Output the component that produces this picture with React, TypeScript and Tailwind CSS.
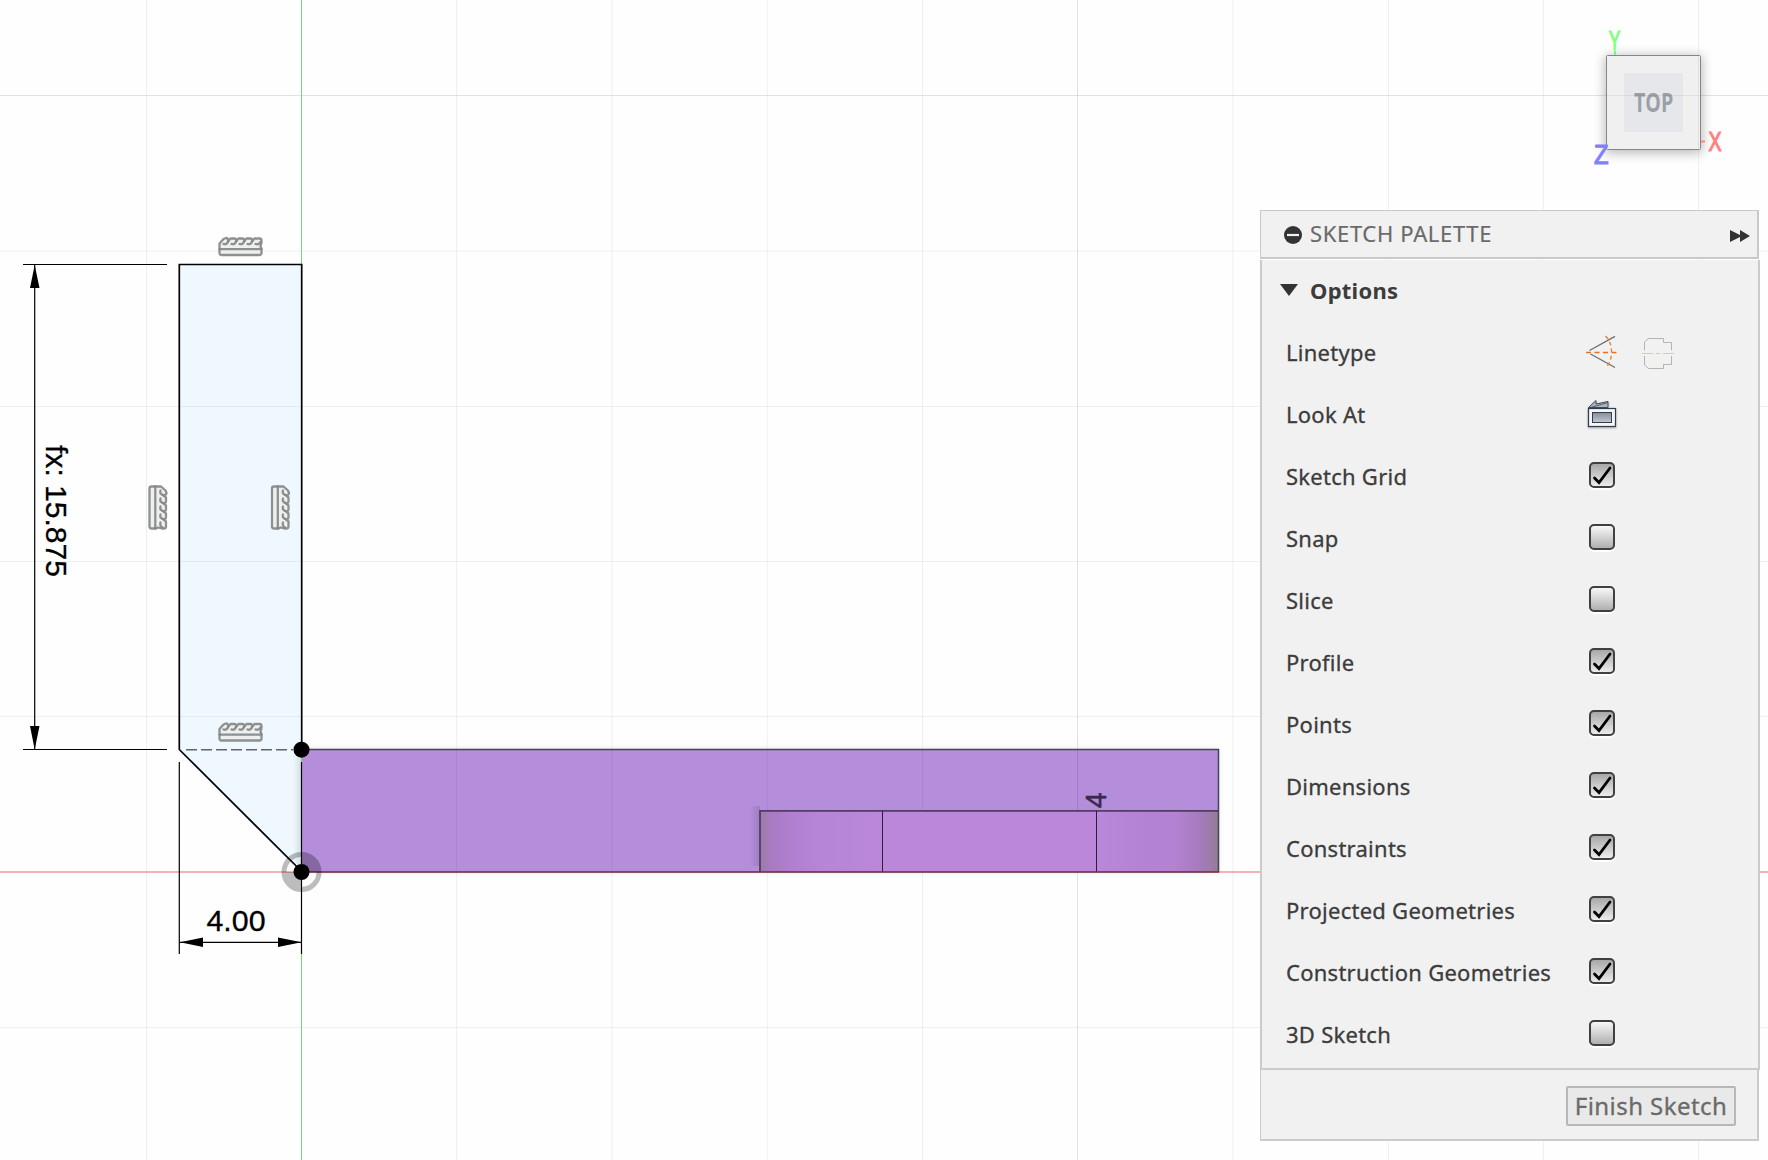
import React from "react";

const V = [146.5, 456.5, 612, 767.3, 922.5, 1077.5, 1233, 1388.5, 1543.5, 1698.5];
const H = [95.5, 251, 406.5, 561.5, 716.5, 1027.5];

function Hatch({ x, y, vertical }: { x: number; y: number; vertical?: boolean }) {
  return (
    <g
      transform={vertical ? `translate(${x} ${y}) rotate(90)` : `translate(${x} ${y})`}
      fill="none"
      stroke="#858887"
      strokeOpacity="0.92"
      strokeWidth="2.300"
      strokeLinejoin="round"
      strokeLinecap="round"
    >
      <path
        d="M-19 8.500Q-21 8.500-21 6.500V-3L-17-7.500L-14.500-8.500Q-11.500-8-12.500-5L-10-8H-6.500Q-3.500-8-4.500-5L-2-8H1.500Q4.500-8 3.500-5L6-8H9.500Q12.500-8 11.500-5L14-8H19Q21-8 21-6V-4L20 0L21 2V6.500Q21 8.500 19 8.500Z"
        fill="#eef0f0"
      />
      <path d="M-21 2.700H21M-12.500-5Q-13.500-1.500-17-2.500M-4.500-5Q-5.500-1.500-9-2.500M3.500-5Q2.500-1.500-1-2.500M11.500-5Q10.500-1.500 7-2.500M20-4.500Q18.500-1.500 15-2.500" />
    </g>
  );
}

function Drawing() {
  return (
    <svg className="absolute inset-0 block" width="1768" height="1160" viewBox="0 0 1768 1160">
      <defs>
        <linearGradient id="curveL">
          <stop offset="0" stopColor="#9c7aa8" />
          <stop offset="0.08" stopColor="#a67bc0" />
          <stop offset="0.25" stopColor="#b07fd0" />
          <stop offset="0.5" stopColor="#b785d8" />
          <stop offset="1" stopColor="#ba87da" />
        </linearGradient>
        <linearGradient id="curveR">
          <stop offset="0" stopColor="#ba87da" />
          <stop offset="0.45" stopColor="#b382d4" />
          <stop offset="0.65" stopColor="#b382d2" />
          <stop offset="0.85" stopColor="#a57bbd" />
          <stop offset="0.95" stopColor="#9c7ba6" />
          <stop offset="1" stopColor="#917d90" />
        </linearGradient>
        <linearGradient id="shadeL">
          <stop offset="0" stopColor="#806499" stopOpacity="0" />
          <stop offset="1" stopColor="#806499" stopOpacity="0.4" />
        </linearGradient>
        <linearGradient id="edgeShade">
          <stop offset="0" stopColor="#9aa5a8" stopOpacity="0" />
          <stop offset="1" stopColor="#9aa5a8" stopOpacity="0.3" />
        </linearGradient>
        <filter id="soft" x="-5%" y="-15%" width="110%" height="130%">
          <feGaussianBlur stdDeviation="3" />
        </filter>
        <filter id="halo" x="-20%" y="-20%" width="140%" height="140%">
          <feGaussianBlur stdDeviation="6" />
        </filter>
      </defs>

      <rect x="303" y="749" width="915" height="123" fill="#000" opacity="0.1" filter="url(#soft)" />
      <path d="M179.500 264.500H301.500V871.500L179.500 749.500Z" fill="#f0f8ff" />
      <rect x="293" y="756" width="8" height="108" fill="url(#edgeShade)" />
      <rect x="301.500" y="750" width="917" height="122" fill="#b48ddb" />
      <rect x="750" y="806" width="10" height="60" fill="url(#shadeL)" />
      <rect x="760" y="811" width="122" height="61" fill="url(#curveL)" />
      <rect x="882" y="811" width="214" height="61" fill="#ba87da" />
      <rect x="1096" y="811" width="122" height="61" fill="url(#curveR)" />

      <g stroke="#000" strokeOpacity="0.055">
        {V.map((x) => (
          <path key={x} d={x > 700 && x < 1218 ? `M${x} 0V810M${x} 873V1160` : `M${x} 0V1160`} />
        ))}
        {H.map((y) => (
          <path key={y} d={`M0 ${y}H1768`} />
        ))}
        <path d="M1077.500 0V810M1077.500 873V1160M0 95.500H1768" />
      </g>

      <path d="M0 872H1768" stroke="#e03038" strokeOpacity="0.36" strokeWidth="2" />
      <path d="M301.500 0V1160" stroke="#77d877" />

      <g fill="none">
        <path d="M301 749.500H1218.500V872" strokeWidth="1.500" stroke="#454558" />
        <path d="M760 872V810.800H1218" strokeWidth="1.800" stroke="#513e62" />
        <path d="M882.500 811V872M1096.500 811V872" stroke="#2c1d38" />
        <path d="M302 872H1219" stroke="#673547" strokeWidth="1.600" />
      </g>
      <text
        transform="translate(1105.500 808) rotate(-90)"
        fontFamily="Liberation Sans"
        fontSize="30"
        textLength="15.500"
        lengthAdjust="spacingAndGlyphs"
        fill="#3b2a4c"
        stroke="#3b2a4c"
        strokeWidth="0.600"
      >
        4
      </text>

      <g fill="none" stroke="#000">
        <path d="M301.500 762V954M23 264.500H167M23 749.500H167M34.700 264V750M179.300 762V954M179 942.300H302" strokeWidth="1.200" />
        <path d="M301.700 871.500L179.300 749.500V264.500H301.700V750" strokeWidth="1.700" />
        <path d="M186 749.700H293" stroke="#606569" strokeWidth="1.400" strokeDasharray="11 4" />
      </g>
      <g fill="#000">
        <path d="M34.700 265L39.500 288H30ZM34.700 749.500L39.500 726H30ZM180 942.300L203 937.500V947ZM301.500 942.300L278 937.500V947Z" />
        <circle cx="301.500" cy="749.700" r="8" />
        <path d="M301.500 872V857A15 15 0 0 1 316.500 872ZM301.500 872V887A15 15 0 0 1 286.500 872Z" fillOpacity="0.26" />
        <circle cx="301.500" cy="872" r="17.500" fill="none" stroke="#000" strokeOpacity="0.26" strokeWidth="5" />
        <circle cx="301.500" cy="872" r="8" />
        <g stroke="#000" strokeWidth="0.300">
          <text x="206.500" y="930.500" fontFamily="Liberation Sans" fontSize="30" textLength="59" lengthAdjust="spacingAndGlyphs">
            4.00
          </text>
          <text transform="translate(46 445) rotate(90)" fontFamily="Liberation Sans" fontSize="30" textLength="132" lengthAdjust="spacingAndGlyphs">
            fx: 15.875
          </text>
        </g>
      </g>
      <Hatch x={240.5} y={246.5} />
      <Hatch x={240.5} y={732} />
      <Hatch x={158} y={507.5} vertical />
      <Hatch x={280.5} y={507.5} vertical />

      <rect x="1605" y="56" width="97" height="97" fill="#000" opacity="0.28" filter="url(#halo)" />
      <path d="M1615 51V56" stroke="#80f080" strokeWidth="2" />
      <path d="M1700 141.500H1705" stroke="#ff8585" strokeWidth="2" />
      <rect x="1606.500" y="55.500" width="94" height="94" rx="1" fill="#f0f0f0" stroke="#868686" />
      <rect x="1624" y="73" width="59" height="59" fill="#e6e7eb" />
      <g fontFamily="Liberation Sans">
        <text
          transform="translate(1634 112) scale(0.720 1)"
          fontFamily="Open Sans"
          fontWeight="700"
          fontSize="27"
          fill="#9c9fa8"
          textLength="54.500"
          lengthAdjust="spacingAndGlyphs"
        >
          TOP
        </text>
        <text transform="translate(1608.700 50.300) scale(0.640 1)" fontSize="27.500" fill="#80ff80" stroke="#80ff80" strokeWidth="1.200">
          Y
        </text>
        <text transform="translate(1708.500 151) scale(0.700 1)" fontSize="28" fill="#ff8080" stroke="#ff8080" strokeWidth="1.200">
          X
        </text>
        <text transform="translate(1594 164) scale(0.850 1)" fontSize="28" fill="#8080ff" stroke="#8080ff" strokeWidth="1.200">
          Z
        </text>
      </g>
      <path d="M1607 95.500H1700M1698.500 56V149" stroke="#000" strokeOpacity="0.06" />
    </svg>
  );
}

function LinetypeIcons() {
  return (
    <svg width="92" height="36" viewBox="1584 335 92 36" fill="none" className="block">
      <path d="M1589.500 350.500L1615 336.300M1590.500 354L1615 367.500" stroke="#707070" strokeWidth="1.400" />
      <path d="M1586 352.500H1617" stroke="#ed7020" strokeDasharray="5 3.500" strokeWidth="1.500" />
      <path d="M1605.500 336Q1611.500 342 1611.500 352T1605.500 368" stroke="#ed8038" strokeDasharray="4 3" strokeWidth="1.400" />
      <path
        d="M1644.500 350.500V342L1648.500 338.500H1663.500V342.500H1671.500V350.500M1644.500 356V365L1648.500 368.500H1663.500V364.500H1671.500V356"
        stroke="#b4b4b4"
      />
      <path d="M1642 353.500H1653M1656 353.500H1660M1663 353.500H1674" stroke="#edc2aa" />
    </svg>
  );
}

function LookAtIcon() {
  return (
    <svg width="32" height="32" viewBox="0 0 32 32" className="mb-0.5 ml-0.5 block drop-shadow-[0_1px_1px_rgba(0,0,0,0.3)]">
      <defs>
        <linearGradient id="screen" x2="0" y2="1">
          <stop stopColor="#858c98" />
          <stop offset="1" stopColor="#c3c9d2" />
        </linearGradient>
      </defs>
      <path d="M2.500 9.500L10 2.500V6L22 3.500V9.500Z" fill="#a9b6c2" stroke="#444b58" />
      <path d="M4.500 9.500L22 4.500" stroke="#444b58" strokeWidth="0.800" />
      <rect x="2.500" y="10.500" width="27" height="18" fill="#f3f6fb" stroke="#343b4b" strokeWidth="1.200" />
      <rect x="6.500" y="14.500" width="19" height="10" fill="url(#screen)" stroke="#343b4b" />
    </svg>
  );
}

function Check({ on }: { on: boolean }) {
  return (
    <span
      className={
        "mb-1 ml-[5px] block size-[26px] rounded-[5px] border-2 border-[#404040] shadow-[0_2px_1px_#fff] " +
        (on ? "bg-linear-to-b from-[#a8a8a8] to-[#ececec]" : "bg-linear-to-b from-[#f8f8f8] to-[#b0b0b0]")
      }
    >
      {on && (
        <svg width="22" height="22" viewBox="0 0 22 22" className="block">
          <path d="M3.500 14L8 18.500L19 4" fill="none" stroke="#000" strokeWidth="2.800" strokeLinecap="round" />
        </svg>
      )}
    </span>
  );
}

const rows: [string, React.ReactNode][] = [
  ["Linetype", <LinetypeIcons />],
  ["Look At", <LookAtIcon />],
  ["Sketch Grid", <Check on />],
  ["Snap", <Check on={false} />],
  ["Slice", <Check on={false} />],
  ["Profile", <Check on />],
  ["Points", <Check on />],
  ["Dimensions", <Check on />],
  ["Constraints", <Check on />],
  ["Projected Geometries", <Check on />],
  ["Construction Geometries", <Check on />],
  ["3D Sketch", <Check on={false} />],
];

export default function App() {
  return (
    <div className="relative flex h-[1160px] w-[1768px] justify-end overflow-hidden bg-[#fefefe] pt-[210px] pr-2 font-['Noto_Sans',sans-serif] text-[22px] leading-[30px]">
      <Drawing />
      <aside className="relative flex h-[931px] w-[500px] flex-col text-[#3c3c3c]">
        <header className="mb-px flex h-[49px] w-[499px] shrink-0 items-center border-t border-r-2 border-b-2 border-l border-[#c9c9c9] bg-[#f1f1f1] pr-[7px] pl-[23px]">
          <svg width="18" height="18" viewBox="0 0 18 18" className="mt-0.5 block">
            <circle cx="9" cy="9" r="9" fill="#333" />
            <path d="M3 9H15" stroke="#f1f1f1" strokeWidth="2.200" />
          </svg>
          <span className="mb-0.5 ml-2 tracking-[0.66px] text-[#6a6a6a] [-webkit-text-stroke:0.2px]">SKETCH PALETTE</span>
          <svg width="20" height="12" viewBox="0 0 20 12" fill="#333" className="mt-1 ml-auto block">
            <path d="M0 0L10 5V0L20 6L10 12V7L0 12Z" />
          </svg>
        </header>
        <div className="flex h-[810px] shrink-0 flex-col border-x-2 border-b-2 border-[#cbcbcb] bg-[#f1f1f1]">
          <div className="flex h-[62px] items-center pl-[18px]">
            <svg width="18" height="12" viewBox="0 0 18 12" className="mb-0.5 block">
              <path d="M0 0H18L9 12Z" fill="#333" />
            </svg>
            <span className="mb-0.5 ml-3 font-bold tracking-[0.25px]">Options</span>
          </div>
          {rows.map(([name, control]) => (
            <div key={name} className="flex h-[62px] items-center pl-6">
              <span className="mb-0.5 w-[298px] shrink-0 whitespace-nowrap tracking-[0.26px] [-webkit-text-stroke:0.3px]">{name}</span>
              {control}
            </div>
          ))}
        </div>
        <footer className="flex h-[71px] w-[499px] shrink-0 justify-end border-r-2 border-b-2 border-l border-[#cbcbcb] bg-[#f1f1f1] pt-4 pr-[21px]">
          <button className="flex h-10 w-[170px] items-center justify-center rounded-[2px] border-2 border-[#b7b7b7] bg-[#e9e9e9] text-2xl tracking-[0.43px] whitespace-nowrap text-[#6a6a6a] [-webkit-text-stroke:0.3px]">
            Finish Sketch
          </button>
        </footer>
      </aside>
    </div>
  );
}
